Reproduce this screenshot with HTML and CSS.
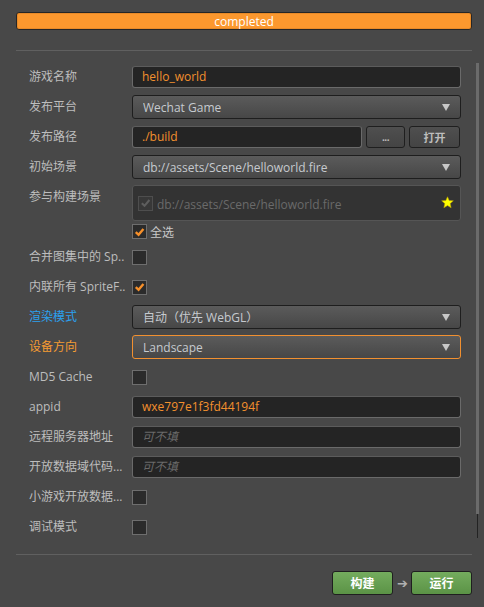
FILE: index.html
```html
<!DOCTYPE html>
<html>
<head>
<meta charset="utf-8">
<link rel="stylesheet" href="styles.css">
</head>
<body>
<div class="progress"><span>completed</span></div>
<div class="sep"></div>
<div class="scroll">
  <div class="form">
    <div class="row">
      <div class="label">游戏名称</div>
      <div class="input value">hello_world</div>
    </div>
    <div class="row">
      <div class="label">发布平台</div>
      <div class="select"><span>Wechat Game</span><i class="arrow"></i></div>
    </div>
    <div class="row">
      <div class="label">发布路径</div>
      <div class="input value path">./build</div>
      <div class="btn dots">...</div>
      <div class="btn open">打开</div>
    </div>
    <div class="row">
      <div class="label">初始场景</div>
      <div class="select"><span>db://assets/Scene/helloworld.fire</span><i class="arrow"></i></div>
    </div>
    <div class="scenes">
      <div class="label top">参与构建场景</div>
      <div class="scene-col">
        <div class="scene-box">
          <span class="cb disabled"><svg viewBox="0 0 14 14" width="14" height="14"><path d="M3 7.2 L6 10 L11.2 3.8" fill="none" stroke="#5e5e5e" stroke-width="2.2"/></svg></span>
          <span class="scene-name">db://assets/Scene/helloworld.fire</span>
          <svg class="star" viewBox="0 0 14 14" width="13" height="13"><path d="M7 0.8 L8.8 4.9 L13.3 5.2 L9.9 8.2 L10.9 12.7 L7 10.3 L3.1 12.7 L4.1 8.2 L0.7 5.2 L5.2 4.9 Z" fill="#ffff00" stroke="#b8a000" stroke-width="0.6"/></svg>
        </div>
        <div class="selall"><span class="cb checked"><svg viewBox="0 0 14 14" width="14" height="14"><path d="M3 7.2 L6 10 L11.2 3.8" fill="none" stroke="#f7902a" stroke-width="2.6"/></svg></span><span class="selall-text">全选</span></div>
      </div>
    </div>
    <div class="row">
      <div class="label">合并图集中的 Sp..</div>
      <span class="cb"></span>
    </div>
    <div class="row">
      <div class="label">内联所有 SpriteF..</div>
      <span class="cb checked"><svg viewBox="0 0 14 14" width="14" height="14"><path d="M3 7.2 L6 10 L11.2 3.8" fill="none" stroke="#f7902a" stroke-width="2.6"/></svg></span>
    </div>
    <div class="row">
      <div class="label blue">渲染模式</div>
      <div class="select"><span>自动（优先 WebGL）</span><i class="arrow"></i></div>
    </div>
    <div class="row">
      <div class="label orange">设备方向</div>
      <div class="select focus"><span>Landscape</span><i class="arrow"></i></div>
    </div>
    <div class="row">
      <div class="label">MD5 Cache</div>
      <span class="cb"></span>
    </div>
    <div class="row">
      <div class="label">appid</div>
      <div class="input value">wxe797e1f3fd44194f</div>
    </div>
    <div class="row">
      <div class="label">远程服务器地址</div>
      <div class="input placeholder">可不填</div>
    </div>
    <div class="row">
      <div class="label">开放数据域代码...</div>
      <div class="input placeholder">可不填</div>
    </div>
    <div class="row">
      <div class="label">小游戏开放数据...</div>
      <span class="cb"></span>
    </div>
    <div class="row">
      <div class="label">调试模式</div>
      <span class="cb"></span>
    </div>
  </div>
  <div class="scrollbar">
    <div class="thumb"></div>
    <div class="track"></div>
  </div>
</div>
<div class="sep bottom"></div>
<div class="actions">
  <div class="gbtn">构建</div>
  <span class="flow">➔</span>
  <div class="gbtn">运行</div>
</div>
</body>
</html>
```
FILE: styles.css
```css
html, body {
  margin: 0;
  padding: 0;
  background: #484848;
  width: 484px;
  height: 607px;
  overflow: hidden;
  font-family: "Open Sans", "Noto Sans CJK SC", sans-serif;
  font-size: 12px;
  color: #bdbdbd;
}
.progress {
  margin: 12px 12px 0 16px;
  height: 16px;
  border: 1px solid #262626;
  border-radius: 3px;
  background: #fc982e;
  box-shadow: inset 0 0 0 1px #e88a28;
  display: flex;
  align-items: center;
  justify-content: center;
  color: #ffffff;
  font-size: 12px;
  line-height: 16px;
}
.progress span { margin-top: 1px; }
.sep {
  margin: 20px 12px 0 16px;
  height: 1px;
  background: #606060;
}
.sep.bottom {
  margin-top: 0;
}
.scroll {
  display: flex;
  height: 503px;
}
.form {
  padding: 11px 0 0 29px;
  width: 432px;
}
.row {
  height: 30px;
  display: flex;
  align-items: center;
}
.label {
  width: 103px;
  flex: none;
  white-space: nowrap;
  overflow: hidden;
  color: #bdbdbd;
  line-height: 16px;
}
.label.blue { color: #2ba1ef; }
.label.orange { color: #f59b32; }
.label.top { align-self: flex-start; margin-top: 7px; }
.input {
  box-sizing: border-box;
  width: 329px;
  height: 22px;
  background: #242424;
  border: 1px solid #6a6a6a;
  border-top-color: #5c5c5c;
  border-radius: 3px;
  padding: 0 9px;
  line-height: 20px;
  white-space: nowrap;
  overflow: hidden;
}
.input.value { color: #f3902e; }
.input.placeholder { color: #6a6a6a; font-style: italic; }
.input.path { width: 230px; }
.btn {
  box-sizing: border-box;
  height: 22px;
  margin-left: 4px;
  border: 1px solid #1f1f1f;
  border-radius: 3px;
  background: linear-gradient(#4f4f4f, #444444);
  color: #bdbdbd;
  display: flex;
  align-items: center;
  justify-content: center;
  font-size: 11px;
}
.btn.dots { width: 39px; font-size: 10px; font-weight: bold; letter-spacing: -0.5px; }
.btn.open { width: 51px; font-weight: bold; }
.select {
  box-sizing: border-box;
  width: 329px;
  height: 24px;
  border: 1px solid #1e1e1e;
  border-radius: 3px;
  background: linear-gradient(#5b5b5b, #474747);
  display: flex;
  align-items: center;
  padding: 0 10px 0 10px;
  color: #c6cacf;
  white-space: nowrap;
}
.select span { flex: 1; overflow: hidden; }
.select.focus { border-color: #f19030; }
.arrow {
  width: 0;
  height: 0;
  border-left: 4.5px solid transparent;
  border-right: 4.5px solid transparent;
  border-top: 7px solid #c8c8c8;
}
.scenes {
  display: flex;
  height: 60px;
}
.scene-col {
  display: flex;
  flex-direction: column;
  padding-top: 3px;
}
.scene-box {
  box-sizing: border-box;
  width: 329px;
  height: 36px;
  background: #333333;
  border: 1px solid #555555;
  border-radius: 3px;
  display: flex;
  align-items: center;
  padding: 0 5px;
}
.scene-name {
  flex: 1;
  color: #6a6a6a;
  margin-left: 4px;
  margin-top: 2px;
}
.star { margin-bottom: 2px; margin-right: 1px; }
.cb {
  box-sizing: border-box;
  width: 15px;
  height: 15px;
  background: #2b2b2b;
  border: 1px solid #6e6e6e;
  display: inline-flex;
  align-items: center;
  justify-content: center;
  flex: none;
}
.cb.disabled {
  background: #383838;
  border-color: #4e4e4e;
}
.cb svg { display: block; }
.selall {
  display: flex;
  align-items: center;
  margin-top: 3px;
  height: 15px;
}
.selall-text { margin-left: 3px; color: #c8c8c8; }
.scrollbar {
  margin-left: 14px;
  padding-top: 12px;
  width: 4px;
  display: flex;
  flex-direction: column;
  align-items: center;
}
.thumb {
  width: 3px;
  height: 451px;
  background: #6b6b6b;
}
.track {
  width: 1px;
  height: 24px;
  background: #232323;
}
.actions {
  display: flex;
  justify-content: flex-end;
  align-items: center;
  padding: 16px 12px 0 0;
}
.gbtn {
  box-sizing: border-box;
  width: 61px;
  height: 24px;
  border: 1px solid #1f1f1f;
  border-radius: 3px;
  background: linear-gradient(#74ac5e, #5b9346);
  color: #ffffff;
  font-weight: bold;
  display: flex;
  align-items: center;
  justify-content: center;
}
.flow {
  color: #b0b0b0;
  font-size: 13px;
  font-weight: bold;
  margin: 0 3px 0 4px;
  font-family: "DejaVu Sans", sans-serif;
}
```
